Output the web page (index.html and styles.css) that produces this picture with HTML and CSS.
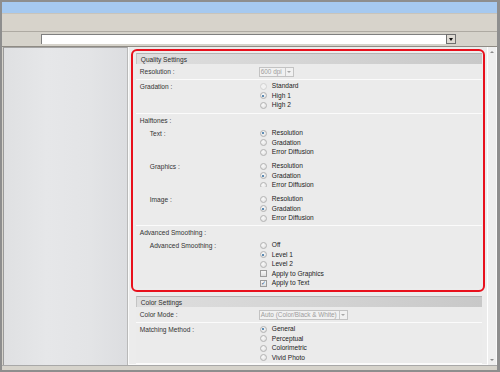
FILE: index.html
```html
<!DOCTYPE html>
<html lang="en">
<head>
    <meta charset="UTF-8">
    <meta name="viewport" content="width=device-width, initial-scale=1.0">
    <title>Quality Settings</title>
    <link rel="stylesheet" href="styles.css">
</head>
<body>

<div class="window">
    <div class="titlebar"></div>
    <div class="toolbar"></div>
    <div class="addressbar">
        <div class="address-input"></div>
        <div class="address-drop"><span class="arrow-down"></span></div>
    </div>

    <div class="content">
        <div class="sidebar"></div>

        <div class="main">
            <div class="highlight">
                <div class="panel">
                    <div class="panel-header">Quality Settings</div>

                    <div class="row single">
                        <div class="label">Resolution :</div>
                        <div class="select small"><span class="select-text">600 dpi</span><span class="select-btn"></span></div>
                    </div>

                    <div class="row group">
                        <div class="label">Gradation :</div>
                        <div class="options">
                            <div class="option"><span class="radio disabled"></span>Standard</div>
                            <div class="option"><span class="radio checked"></span>High 1</div>
                            <div class="option"><span class="radio"></span>High 2</div>
                        </div>
                    </div>

                    <div class="section halftones">
                        <div class="section-title">Halftones :</div>

                        <div class="sub first">
                            <div class="label">Text :</div>
                            <div class="options">
                                <div class="option"><span class="radio checked"></span>Resolution</div>
                                <div class="option"><span class="radio"></span>Gradation</div>
                                <div class="option"><span class="radio"></span>Error Diffusion</div>
                            </div>
                        </div>

                        <div class="sub clipped">
                            <div class="label">Graphics :</div>
                            <div class="options">
                                <div class="option"><span class="radio"></span>Resolution</div>
                                <div class="option"><span class="radio checked"></span>Gradation</div>
                                <div class="option"><span class="radio"></span>Error Diffusion</div>
                            </div>
                        </div>

                        <div class="sub after-clip">
                            <div class="label">Image :</div>
                            <div class="options">
                                <div class="option"><span class="radio"></span>Resolution</div>
                                <div class="option"><span class="radio checked"></span>Gradation</div>
                                <div class="option"><span class="radio"></span>Error Diffusion</div>
                            </div>
                        </div>
                    </div>

                    <div class="section smoothing">
                        <div class="section-title">Advanced Smoothing :</div>

                        <div class="sub smooth-sub">
                            <div class="label">Advanced Smoothing :</div>
                            <div class="options">
                                <div class="option"><span class="radio"></span>Off</div>
                                <div class="option"><span class="radio checked"></span>Level 1</div>
                                <div class="option"><span class="radio"></span>Level 2</div>
                                <div class="option"><span class="check"></span>Apply to Graphics</div>
                                <div class="option"><span class="check checked">&#10003;</span>Apply to Text</div>
                            </div>
                        </div>
                    </div>
                </div>
            </div>

            <div class="panel color-panel">
                <div class="panel-header">Color Settings</div>

                <div class="row single">
                    <div class="label">Color Mode :</div>
                    <div class="select wide"><span class="select-text">Auto (Color/Black &amp; White)</span><span class="select-btn"></span></div>
                </div>

                <div class="row group last">
                    <div class="label">Matching Method :</div>
                    <div class="options">
                        <div class="option"><span class="radio checked"></span>General</div>
                        <div class="option"><span class="radio"></span>Perceptual</div>
                        <div class="option"><span class="radio"></span>Colorimetric</div>
                        <div class="option"><span class="radio"></span>Vivid Photo</div>
                    </div>
                </div>
            </div>
        </div>

        <div class="scrollbar">
            <span class="scroll-up"></span>
            <span class="scroll-down"></span>
        </div>
    </div>

    <div class="statusbar"></div>
</div>

</body>
</html>
```

FILE: styles.css
```css
body {
    margin: 0;
    font-family: "Liberation Sans", Arial, sans-serif;
    font-size: 6.6px;
    color: #333;
}

.window {
    width: 500px;
    height: 372px;
    box-sizing: border-box;
    border: 2px solid #8e8e8e;
    border-right-width: 3px;
    display: flex;
    flex-direction: column;
    overflow: hidden;
    background-color: #d6d3cb;
}

.titlebar {
    height: 11px;
    background-color: #a6c9f0;
    border-bottom: 1px solid #c8c4bc;
}

.toolbar {
    height: 17px;
    background-color: #d7d3cb;
    border-bottom: 1px solid #aeaaa2;
}

.addressbar {
    height: 15px;
    box-sizing: border-box;
    padding-top: 2px;
    display: flex;
    align-items: flex-start;
    background-color: #d6d3cb;
    border-bottom: 1px solid #8f8b84;
}

.address-input {
    margin-left: 39px;
    width: 405px;
    height: 10px;
    box-sizing: border-box;
    background-color: #fff;
    border-top: 1px solid #7f7f7f;
    border-left: 1px solid #7f7f7f;
}

.address-drop {
    width: 10px;
    height: 10px;
    box-sizing: border-box;
    border: 1px solid #6f6f6f;
    background-color: #dedad3;
    display: flex;
    align-items: center;
    justify-content: center;
}

.arrow-down {
    width: 0;
    height: 0;
    border-left: 2.5px solid transparent;
    border-right: 2.5px solid transparent;
    border-top: 3px solid #111;
}

.content {
    height: 318px;
    display: flex;
}

.sidebar {
    width: 123px;
    margin-left: 1px;
    border-left: 1px solid #9a9a9a;
    border-right: 1px solid #b9b9b9;
    border-top: 1px solid #a4a4a4;
    background: linear-gradient(to right, #dfe0e2, #e6e7e9 35%, #e3e4e6 70%, #dcdde0);
}

.main {
    width: 360px;
    box-sizing: border-box;
    padding: 2px 2px 0 2px;
    background-color: #ececec;
    border-left: 1px solid #fafafa;
    border-bottom: 1px solid #fafafa;
    overflow: hidden;
}

.highlight {
    border: 2px solid #e8101c;
    border-radius: 6px;
    padding: 2px 3px 2px 3px;
}

.panel {
    width: 346px;
    background-color: #ebebeb;
}

.color-panel {
    margin: 4px 5px 0 5px;
}

.panel-header {
    height: 11px;
    box-sizing: border-box;
    line-height: 11px;
    padding-left: 4px;
    color: #2e2e2e;
    border-top: 1px solid #b4b4b4;
    border-left: 1px solid #c4c4c4;
    background: linear-gradient(to right, #dedede, #d2d2d2 60%, #c8c8c8);
}

.row {
    display: flex;
    padding-left: 4px;
    border-bottom: 1px solid #fbfbfb;
}

.row.single {
    height: 16px;
    box-sizing: border-box;
    align-items: center;
}

.row.group {
    padding-top: 1.25px;
    padding-bottom: 3.25px;
}

.row.group .label {
    line-height: 9.5px;
    margin-top: 0.5px;
}

.row.last {
    padding-top: 1.25px;
    padding-bottom: 1px;
}

.label {
    width: 119px;
    flex-shrink: 0;
}

.options {
    display: flex;
    flex-direction: column;
}

.option {
    height: 9.5px;
    line-height: 9.5px;
    display: flex;
    align-items: center;
    padding-left: 1px;
    color: #222;
    white-space: nowrap;
}

.radio {
    width: 7px;
    height: 7px;
    box-sizing: border-box;
    border-radius: 50%;
    border: 1px solid #b3b3b3;
    background: radial-gradient(circle at 40% 35%, #fafafa, #dcdcdc);
    margin-right: 5px;
    position: relative;
}

.radio.disabled {
    border-color: #d2d2d2;
    background: #f2f2f2;
}

.radio.checked::after {
    content: "";
    position: absolute;
    left: 1.5px;
    top: 1.5px;
    width: 2px;
    height: 2px;
    border-radius: 50%;
    background-color: #2d6a9f;
}

.check {
    width: 7px;
    height: 7px;
    box-sizing: border-box;
    border: 1px solid #9b9b9b;
    background: linear-gradient(#f8f8f8, #dedede);
    margin-right: 5px;
    font-size: 6px;
    line-height: 5px;
    text-align: center;
    color: #2d5a8a;
}

.select {
    height: 10px;
    box-sizing: border-box;
    border: 1px solid #c3c3c3;
    background-color: #f1f1f1;
    display: flex;
    align-items: center;
}

.select.small {
    width: 35px;
}

.select.wide {
    width: 89px;
}

.select-text {
    flex: 1;
    padding-left: 1px;
    font-size: 6.4px;
    color: #9d9d9d;
    white-space: nowrap;
    overflow: hidden;
    line-height: 8px;
}

.select-btn {
    width: 7px;
    height: 8px;
    border-left: 1px solid #c9c9c9;
    position: relative;
}

.select-btn::after {
    content: "";
    position: absolute;
    left: 1.5px;
    top: 3px;
    border-left: 2px solid transparent;
    border-right: 2px solid transparent;
    border-top: 2px solid #a8a8a8;
}

.section {
    padding-left: 4px;
    border-bottom: 1px solid #fbfbfb;
}

.section-title {
    height: 9.5px;
    line-height: 9.5px;
}

.halftones {
    padding-top: 2px;
    padding-bottom: 2.25px;
}

.smoothing {
    padding-top: 1.5px;
    padding-bottom: 0.25px;
    border-bottom: none;
}

.sub {
    display: flex;
    padding-left: 10px;
}

.sub .label {
    width: 109px;
    line-height: 9.5px;
    margin-top: 0.5px;
}

.sub.first {
    margin-top: 2.75px;
}

.sub.clipped {
    margin-top: 4.5px;
    height: 26px;
    overflow: hidden;
}

.sub.after-clip {
    margin-top: 7px;
}

.smooth-sub {
    margin-top: 3.25px;
}

.scrollbar {
    width: 10px;
    box-sizing: border-box;
    background-color: #efefef;
    border-left: 1px solid #fff;
    border-right: 1px solid #fafafa;
    display: flex;
    flex-direction: column;
    justify-content: space-between;
    align-items: center;
    padding: 4px 0 4px 0;
}

.scroll-up {
    width: 0;
    height: 0;
    border-left: 2px solid transparent;
    border-right: 2px solid transparent;
    border-bottom: 2px solid #8a8a8a;
}

.scroll-down {
    width: 0;
    height: 0;
    border-left: 2px solid transparent;
    border-right: 2px solid transparent;
    border-top: 2px solid #8a8a8a;
}

.statusbar {
    flex: 1;
    border-top: 1px solid #a8a8a8;
    background-color: #d6d3cb;
}
```
